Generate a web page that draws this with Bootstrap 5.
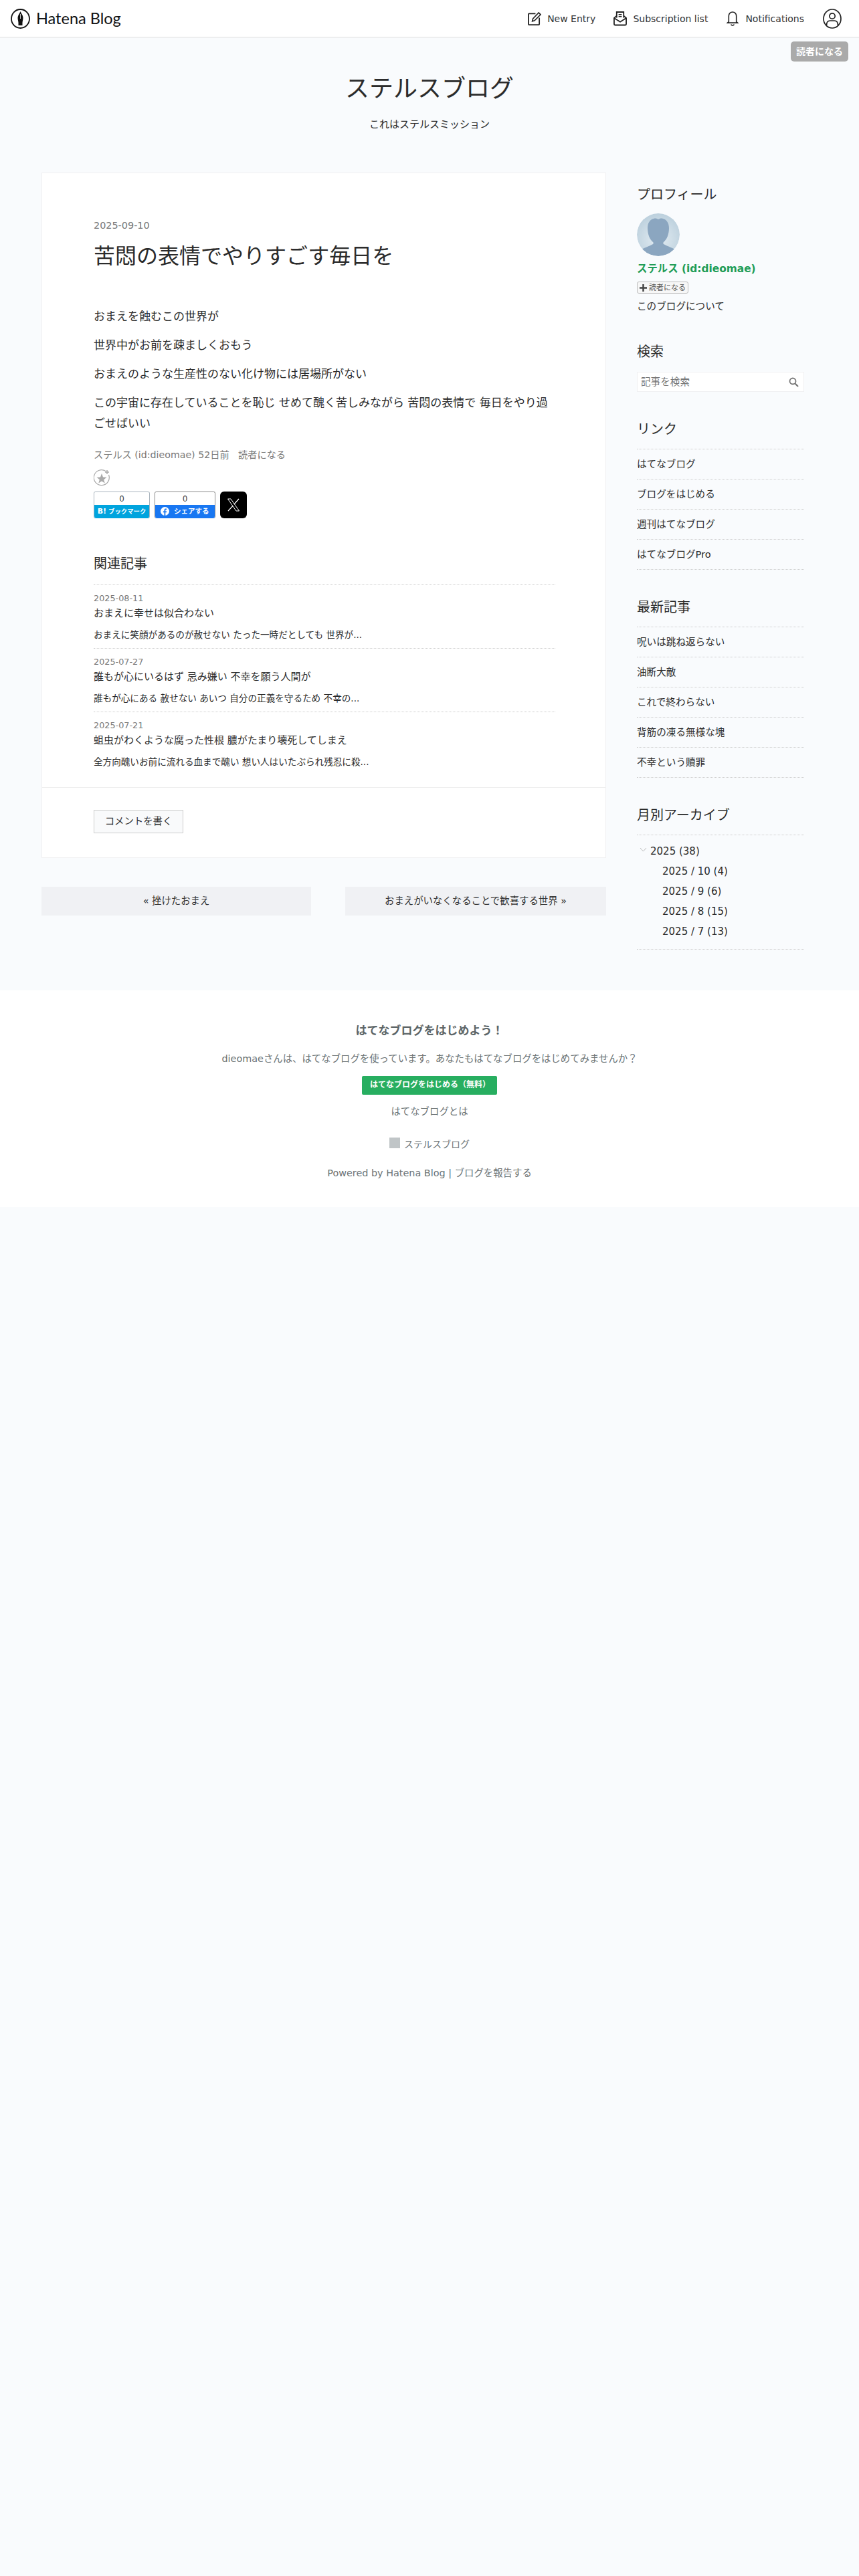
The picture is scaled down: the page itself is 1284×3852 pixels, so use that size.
<!DOCTYPE html>
<html lang="ja">
<head>
<meta charset="utf-8">
<title>苦悶の表情でやりすごす毎日を</title>
<link href="https://cdn.jsdelivr.net/npm/bootstrap@5.3.0/dist/css/bootstrap.min.css" rel="stylesheet">
<style>
body{background:#f9fbfd;color:#2b2b2b;font-family:"DejaVu Sans","Noto Sans CJK JP",sans-serif;font-size:16px;min-height:3852px}
a{color:inherit;text-decoration:none}
.topbar{height:56px;background:#fff;border-bottom:1px solid #ddd;padding:0 26px 0 16px}
.logotxt{font-family:Lato,"Liberation Sans",sans-serif;font-size:23.5px;color:#111;margin-left:9px;font-weight:400;line-height:1}
.tool{font-size:14px;color:#333;line-height:1;margin-right:28px}
.toola{margin-right:27px}
.tool svg{margin-right:9px}
.tool svg.bell{margin-right:10px}
.subwrap{height:28px;padding:6px 16px 0 0}
.subbtn{background:#aaa;color:#fff;font-size:14px;font-weight:700;border-radius:5px;padding:0 8px;height:30px;line-height:30px;display:inline-block}
.bloghead{padding-top:19px;height:174px}
.blogtitle{font-size:36px;line-height:60px;font-weight:400;color:#2b2b2b;margin:0}
.blogdesc{font-size:15px;margin:11px 0 0;line-height:24px}
.layoutw{padding:0 82px 0 62px;gap:46px}
.mainc{width:844px;flex:none}
.articlebox{background:#fff;border:1px solid #f0f0f2;height:1025px}
.art{padding:67px 75px 0 77px}
.artdate{font-size:14.4px;color:#777;line-height:22px}
.arttitle{font-size:32px;font-weight:400;line-height:48px;margin:11px 0 51px;color:#2b2b2b}
.artbody p{font-size:17px;line-height:31px;margin:0 0 12px}
.artfoot{font-size:14.2px;color:#777;line-height:22px;margin-top:20px}
.starbtn{margin-top:11px;height:24px;display:block}
.shares{margin-top:9px;gap:7px}
.sh{width:84px;height:40px;border-radius:3px;overflow:hidden;border:1px solid #a9b4bd;display:flex;flex-direction:column;white-space:nowrap}
.shc{height:19px;line-height:20px;text-align:center;color:#444;background:#fff;font-size:12px}
.shl{flex:1;color:#fff;font-weight:700;display:flex;align-items:center;justify-content:center;gap:3px;line-height:1}
.shb{border-bottom-color:#00a4de}.shb .shl{background:#00a4de;font-size:9.4px}
.shb .shl b{font-size:11px}
.shf{width:91px;border-color:#888;border-bottom-color:#1877f2}.shf .shl{background:#1877f2;font-size:10.5px}
.shx{width:40px;height:40px;background:#000;border-radius:6px}
.relh{font-size:20px;line-height:30px;font-weight:400;margin:53px 0 16px}
.relitem{border-top:1px dotted #ccc;padding:12px 0 5px}
.reld{font-size:12.8px;color:#777;line-height:16px}
.relt{font-size:15px;line-height:28px}
.rels{font-size:13.6px;line-height:30px;margin-top:3px}
.commentbar{border-top:1px solid #eee;margin-top:18px;padding:33px 77px}
.cbtn{background:#f9fafb;border:1px solid #ccc;font-size:14.4px;width:134px;height:35px;line-height:33px;color:#333;display:block;text-align:center}
.pager{margin-top:43px}
.pg{height:43px;line-height:43px;background:#f0f1f4;text-align:center;font-size:14.4px;color:#333;display:block}
.pgl{width:403px}.pgr{width:390px}
.side{width:250px;flex:none;padding-top:18px}
.sideh{font-size:20px;line-height:30px;font-weight:400;margin:0 0 14px}
.sidem{margin-bottom:41px}
.sidea{margin-bottom:13px}
.sideb{margin-bottom:15px}
.avatar{width:64px;height:64px;border-radius:50%;display:block}
.pname{color:#219d57;font-weight:700;font-size:15.4px;line-height:24px;margin-top:7px}
.psub{display:flex;width:77px;align-items:center;justify-content:center;height:18px;border:1px solid #bbb;border-radius:3px;background:#f7f7f7;font-size:11px;color:#555;margin-top:7px;gap:3px;line-height:1;white-space:nowrap}
.pabout{font-size:14.6px;line-height:24px;margin-top:7px}
.searchbox{height:30px;background:#fff;border:1px solid #f0f0f2;padding:0 7px 0 5px;font-size:14.6px;color:#777}
.sidelist{margin:0;padding:0;list-style:none;border-bottom:1px dotted #ccc}
.sidelist li{border-top:1px dotted #ccc;height:45px;line-height:43px;font-size:14.6px}
.arch{border-top:1px dotted #ccc;border-bottom:1px dotted #ccc;padding:9px 0 11px;font-size:15px;line-height:30px}
.archy{padding-left:20px;position:relative}
.archy svg{position:absolute;left:4px;top:9px}
.archm{padding-left:38px}
.foot{background:#fff;margin-top:61px;height:324px;text-align:center;color:#6b7375;padding-top:48px}
.footh{font-size:17px;font-weight:700;line-height:24px;color:#5d6668;margin:0}
.foott{font-size:14.4px;line-height:24px;margin-top:18px}
.footbtn{display:block;width:202px;height:28px;line-height:26px;background:#27ae60;color:#fff;font-weight:700;font-size:12px;border-radius:2px;margin:14px auto 0;text-align:left;padding-left:12px;white-space:nowrap}
.footl{font-size:14.4px;line-height:24px;margin-top:13px}
.foott2{margin-top:25px;font-size:14px;line-height:24px;display:flex;align-items:center;justify-content:center;gap:6px}
.fav{width:16px;height:16px;background:#c0c5c7;display:inline-block;margin-top:-4px}
.footp{font-size:14.4px;line-height:24px;margin-top:19px}
</style>
</head>
<body>
<header class="topbar d-flex align-items-center justify-content-between">
  <a href="#" class="d-flex align-items-center">
    <svg width="29" height="30" viewBox="0 0 29 30"><ellipse cx="14.5" cy="15" rx="13.500" ry="14" fill="#fff" stroke="#111" stroke-width="1.800"/><path d="M14.500 4 C13.500 7 10.500 10 10.500 13.500 C10.500 17 11.500 19 11.500 21 L11.500 25 L17.500 25 L17.500 21 C17.500 19 18.500 17 18.500 13.500 C18.500 10 15.500 7 14.500 4Z" fill="#111"/><path d="M14.500 8v7" stroke="#fff" stroke-width=".8"/></svg>
    <span class="logotxt">Hatena Blog</span>
  </a>
  <nav class="d-flex align-items-center">
    <a href="#" class="tool toola d-flex align-items-center"><svg width="20" height="20" viewBox="0 0 21 21" fill="none" stroke="#222" stroke-width="1.900"><path d="M12 2.500H2a1 1 0 0 0-1 1V19a1 1 0 0 0 1 1h15a1 1 0 0 0 1-1V9"/><path d="M7 14.500l1-4L17 1l3 3-9.500 9.500z" stroke-width="1.700"/></svg>New Entry</a>
    <a href="#" class="tool d-flex align-items-center"><svg width="20" height="23" viewBox="0 0 21 24" fill="none" stroke="#222" stroke-width="1.900"><path d="M5 11V2h11v9"/><path d="M8 6h5M8 9h5" stroke-width="1.600"/><path d="M5 8L1 11.500V21a1.500 1.500 0 0 0 1.500 1.500h16A1.500 1.500 0 0 0 20 21v-9.500L16 8"/><path d="M1 11.500l9.500 6 9.500-6"/></svg>Subscription list</a>
    <a href="#" class="tool d-flex align-items-center"><svg class="bell" width="18" height="23" viewBox="0 0 19 24" fill="none" stroke="#222" stroke-width="1.700"><path d="M3.500 17.500V8a6 6 0 0 1 12 0v9.500l2 1.500H1.500z"/><path d="M7 21.500c1 2 4 2 5 0"/></svg>Notifications</a>
    <a href="#" class="d-block"><svg class="d-block" width="28" height="30" viewBox="0 0 28 30" fill="none" stroke="#222" stroke-width="1.700"><ellipse cx="14" cy="15" rx="13" ry="14"/><circle cx="14" cy="11" r="4.200"/><path d="M5.500 25c0-5 2-7 5-7h7c3 0 5 2 5 7"/></svg></a>
  </nav>
</header>
<div class="subwrap text-end"><a href="#" class="subbtn">読者になる</a></div>
<div class="bloghead text-center">
  <h1 class="blogtitle">ステルスブログ</h1>
  <p class="blogdesc">これはステルスミッション</p>
</div>
<div class="layoutw d-flex align-items-start">
  <main class="mainc">
    <article class="articlebox">
      <div class="art">
        <div class="artdate">2025-09-10</div>
        <h2 class="arttitle">苦悶の表情でやりすごす毎日を</h2>
        <div class="artbody">
          <p>おまえを蝕むこの世界が</p>
          <p>世界中がお前を疎ましくおもう</p>
          <p>おまえのような生産性のない化け物には居場所がない</p>
          <p>この宇宙に存在していることを恥じ せめて醜く苦しみながら 苦悶の表情で 毎日をやり過ごせばいい</p>
        </div>
        <div class="artfoot">ステルス (id:dieomae) 52日前&nbsp;&nbsp; 読者になる</div>
        <a href="#" class="starbtn"><svg width="25" height="25" viewBox="0 0 25 25" fill="none"><path d="M18 2.500A11.500 11.500 0 1 0 22.500 8" stroke="#aaa" stroke-width="1.200"/><path d="M12 6l2 5.500 5.500.3-4.300 3.400 1.500 5.300L12 17.500l-4.700 3 1.500-5.300-4.300-3.400 5.500-.3z" fill="#aaa"/><path d="M20 1v6M17 4h6" stroke="#aaa" stroke-width="1.500"/></svg></a>
        <div class="shares d-flex">
          <div class="sh shb"><div class="shc">0</div><div class="shl"><b>B!</b><span>ブックマーク</span></div></div>
          <div class="sh shf"><div class="shc">0</div><div class="shl"><svg width="13" height="13" viewBox="0 0 13 13"><circle cx="6.500" cy="6.500" r="6.500" fill="#fff"/><path d="M7.300 13V8.300h1.600l.3-1.900H7.300V5.300c0-.6.300-1 1-1h.9V2.700c-1.700-.3-3.700-.2-3.700 2.300v1.400H3.900v1.900h1.600V13z" fill="#1877f2"/></svg>&nbsp;シェアする</div></div>
          <div class="shx d-flex align-items-center justify-content-center"><svg width="20" height="20" viewBox="0 0 20 20" fill="none" stroke="#fff"><path d="M1.500 1h4.500l12.500 18h-4.500z" stroke-width="1"/><path d="M18 1L11 9M9 11.500L2 19" stroke-width="1.200"/></svg></div>
        </div>
        <h3 class="relh">関連記事</h3>
        <div class="relitem"><div class="reld">2025-08-11</div><div class="relt">おまえに幸せは似合わない</div><div class="rels">おまえに笑顔があるのが赦せない たった一時だとしても 世界が...</div></div>
        <div class="relitem"><div class="reld">2025-07-27</div><div class="relt">誰もが心にいるはず 忌み嫌い 不幸を願う人間が</div><div class="rels">誰もが心にある 赦せない あいつ 自分の正義を守るため 不幸の...</div></div>
        <div class="relitem"><div class="reld">2025-07-21</div><div class="relt">蛆虫がわくような腐った性根 膿がたまり壊死してしまえ</div><div class="rels">全方向醜いお前に流れる血まで醜い 想い人はいたぶられ残忍に殺...</div></div>
      </div>
      <div class="commentbar"><a href="#" class="cbtn">コメントを書く</a></div>
    </article>
    <div class="pager d-flex justify-content-between">
      <a href="#" class="pg pgl">« 挫けたおまえ</a>
      <a href="#" class="pg pgr">おまえがいなくなることで歓喜する世界 »</a>
    </div>
  </main>
  <aside class="side">
    <section class="sidem">
      <h4 class="sideh sidea">プロフィール</h4>
      <svg class="avatar" viewBox="0 0 64 64"><defs><clipPath id="cav"><circle cx="32" cy="32" r="32"/></clipPath><radialGradient id="gav" cx=".5" cy=".6" r=".6"><stop offset="0" stop-color="#e4edf3"/><stop offset="1" stop-color="#bcd0dd"/></radialGradient></defs><g clip-path="url(#cav)"><rect width="64" height="64" fill="url(#gav)"/><path d="M25 8c3-1 5 0 7 1 2-1 4-2 7-1 5 1 9 6 9 14 0 9-3 17-8 21-1 1-1 2 0 3 6 4 14 5 20 10v8H4v-8c6-5 14-6 20-10 1-1 1-2 0-3-5-4-8-12-8-21 0-8 4-13 9-14z" fill="#8ba6c0"/></g></svg>
      <div class="pname">ステルス (id:dieomae)</div>
      <a href="#" class="psub"><svg width="11" height="11" viewBox="0 0 11 11"><path d="M5.500 0v11M0 5.500h11" stroke="#444" stroke-width="2.500"/></svg>読者になる</a>
      <div class="pabout">このブログについて</div>
    </section>
    <section class="sidem">
      <h4 class="sideh sideb">検索</h4>
      <div class="searchbox d-flex align-items-center justify-content-between"><span>記事を検索</span><svg width="15" height="15" viewBox="0 0 15 15" fill="none" stroke="#777" stroke-width="1.800"><circle cx="6" cy="6" r="4.500"/><path d="M9.500 9.500L14 14" stroke-width="2.200"/></svg></div>
    </section>
    <section class="sidem">
      <h4 class="sideh">リンク</h4>
      <ul class="sidelist"><li>はてなブログ</li><li>ブログをはじめる</li><li>週刊はてなブログ</li><li>はてなブログPro</li></ul>
    </section>
    <section class="sidem">
      <h4 class="sideh">最新記事</h4>
      <ul class="sidelist"><li>呪いは跳ね返らない</li><li>油断大敵</li><li>これで終わらない</li><li>背筋の凍る無様な塊</li><li>不幸という贖罪</li></ul>
    </section>
    <section>
      <h4 class="sideh">月別アーカイブ</h4>
      <div class="arch">
        <div class="archy"><svg width="11" height="7" viewBox="0 0 11 7" fill="none" stroke="#bbb"><path d="M1 1l4.500 5L10 1"/></svg>2025 (38)</div>
        <div class="archm">2025 / 10 (4)</div>
        <div class="archm">2025 / 9 (6)</div>
        <div class="archm">2025 / 8 (15)</div>
        <div class="archm">2025 / 7 (13)</div>
      </div>
    </section>
  </aside>
</div>
<footer class="foot">
  <h5 class="footh">はてなブログをはじめよう！</h5>
  <div class="foott">dieomaeさんは、はてなブログを使っています。あなたもはてなブログをはじめてみませんか？</div>
  <a href="#" class="footbtn">はてなブログをはじめる（無料）</a>
  <div class="footl">はてなブログとは</div>
  <div class="foott2"><span class="fav"></span><span>ステルスブログ</span></div>
  <div class="footp">Powered by Hatena Blog | ブログを報告する</div>
</footer>
<script src="https://cdn.jsdelivr.net/npm/bootstrap@5.3.0/dist/js/bootstrap.bundle.min.js"></script>
</body>
</html>
